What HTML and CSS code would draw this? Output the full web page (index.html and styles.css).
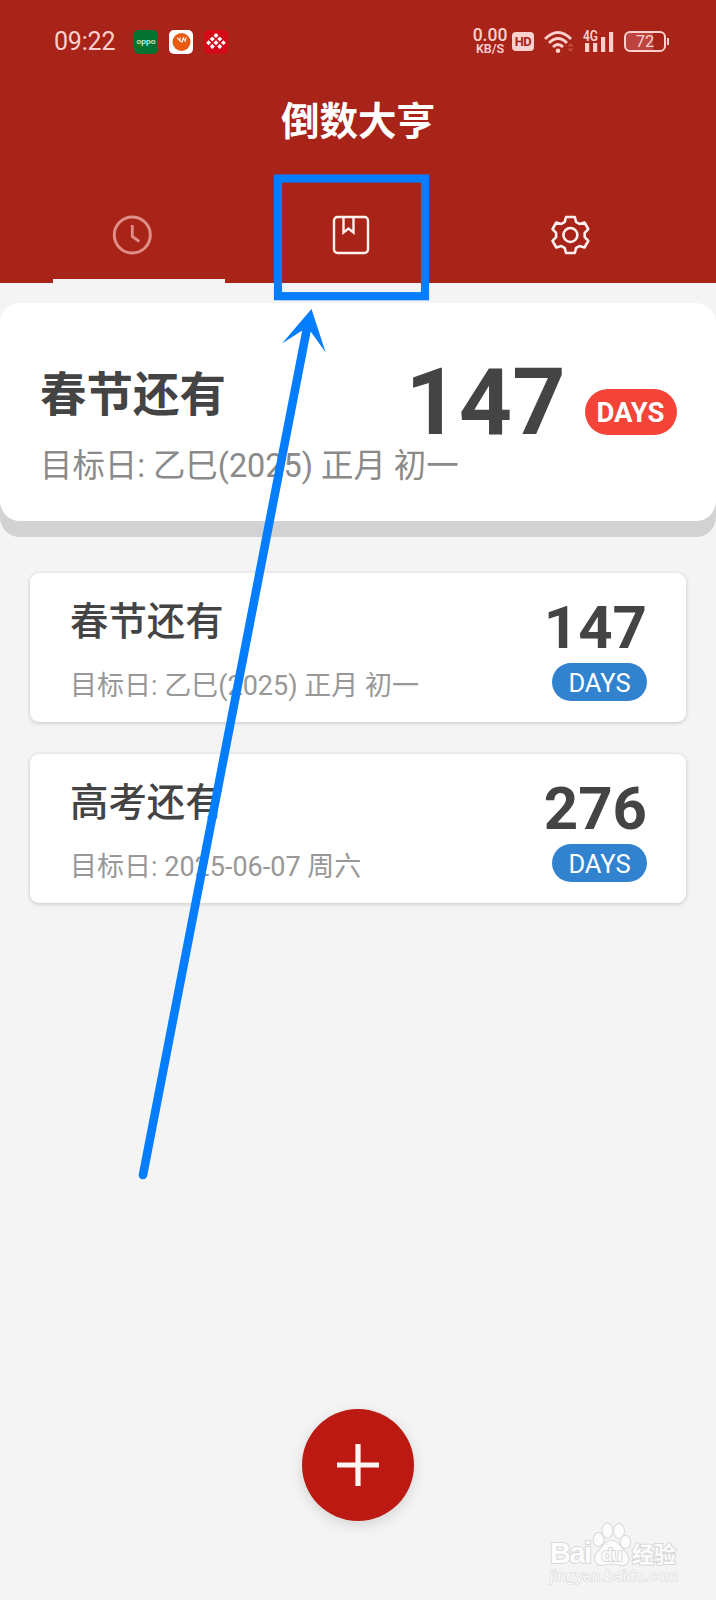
FILE: index.html
```html
<!DOCTYPE html>
<html lang="zh-CN">
<head>
<meta charset="utf-8">
<title>倒数大亨</title>
<link rel="stylesheet" href="styles.css">
</head>
<body>
<div class="screen">
  <header class="header">
    <div class="status">
      <span class="clock">09:22</span>
      <svg class="app-icon" viewBox="0 0 24 24"><rect width="24" height="24" rx="5" fill="#047331"/><text x="12" y="13.500" text-anchor="middle" class="oppo" textLength="19" lengthAdjust="spacingAndGlyphs">oppo</text></svg>
      <svg class="app-icon" viewBox="0 0 24 24"><rect width="24" height="24" rx="5" fill="#fff"/><circle cx="12.500" cy="12" r="9" fill="#e85a13"/><path d="M8 7.500l2.500 3 1-3 M10.500 10.500l2.500 1.500 2-5 M15.500 11l2-3.500 M13.500 8l3.500 4" fill="none" stroke="#fff" stroke-width="1.100"/></svg>
      <svg class="app-icon" viewBox="0 0 24 24"><rect width="24" height="24" rx="5" fill="#d50919"/><path fill="#fff" d="M12 3l2.500 2.500L12 8 9.500 5.500zM8.300 6.500l2.500 2.500-2.500 2.500L5.800 9zM15.700 6.500L18.200 9l-2.500 2.500L13.200 9zM4.600 10.200l2.500 2.500-2.500 2.500-2.500-2.500zM12 10.200l2.500 2.500L12 15.200l-2.500-2.500zM19.400 10.200l2.500 2.500-2.500 2.500-2.500-2.500zM8.300 13.900l2.500 2.500-2.500 2.500-2.500-2.500zM15.700 13.900l2.500 2.500-2.500 2.500-2.500-2.500z"/></svg>
      <div class="speed"><b>0.00</b><small>KB/S</small></div>
      <span class="hd">HD</span>
      <svg class="wifi" viewBox="0 0 31 24"><g fill="none" stroke="#fcd0cd" stroke-width="2.900"><path d="M1 9Q14 -4 27 9"/><path d="M5 13Q14 4 23 13"/><path d="M9 17Q14 12 19 17"/></g><circle cx="14" cy="20.800" r="2.300" fill="#fcd0cd"/><path d="M23.500 16.500l3-3.500 3 3.500zM23.500 18.500l3 3.500 3-3.500z" fill="#c94a43"/></svg>
      <svg class="signal" viewBox="0 0 31 24"><path d="M2 13h4.200v9H2zM10 13h4.200v9H10zM18 7h4.200v15H18zM26 2h4.200v20H26z" fill="#fcd0cd"/><text x="0" y="11" class="net" textLength="15" lengthAdjust="spacingAndGlyphs">4G</text></svg>
      <div class="battery"><span>72</span></div>
    </div>
    <h1 class="title">倒数大亨</h1>
    <nav class="tabs">
      <a class="tab tab-active"><svg class="icon" viewBox="0 0 40 40"><circle cx="20.300" cy="20" r="18" stroke-width="3"/><path d="M20.300 10v11.500l7 5" stroke-width="2.800"/></svg></a>
      <a class="tab"><svg class="icon" viewBox="0 0 40 40"><rect x="3" y="2" width="34" height="36" rx="3.500"/><path d="M12.500 3v14.500l5-4 5 4V3"/></svg></a>
      <a class="tab"><svg class="icon" viewBox="0 0 40 40"><path class="gear" d="M14.800 6.800L16 2H24.800L26 6.800L29.500 9L34.500 7.500L38.300 14.100L34.700 17.800V22.200L38.300 25.900L34.500 32.500L29.500 31L26 33.200L24.800 38H16L14.800 33.200L11.300 31L6.300 32.500L2.500 25.900L6.100 22.200V17.800L2.500 14.100L6.300 7.500L11.300 9Z"/><circle class="gear" cx="20.400" cy="20" r="7"/></svg></a>
    </nav>
  </header>
  <section class="hero">
    <div class="hero-row">
      <h2 class="hero-title">春节还有</h2>
      <b class="hero-num">147</b>
      <span class="hero-pill">DAYS</span>
    </div>
    <p class="hero-sub">目标日: 乙巳(2025) 正月 初一</p>
  </section>
  <main class="list">
    <article class="card">
      <div><h3 class="card-title">春节还有</h3><p class="card-sub">目标日: 乙巳(2025) 正月 初一</p></div>
      <div class="count"><b class="num">147</b><span class="pill">DAYS</span></div>
    </article>
    <article class="card">
      <div><h3 class="card-title">高考还有</h3><p class="card-sub">目标日: 2025-06-07 周六</p></div>
      <div class="count"><b class="num">276</b><span class="pill">DAYS</span></div>
    </article>
  </main>
  <button class="fab" aria-label="添加"><svg viewBox="0 0 112 112"><path d="M35 56h42M56 35v42" stroke="#fff5f2" stroke-width="5.200"/></svg></button>
  <svg class="watermark" viewBox="0 0 150 70">
    <g fill="#fcfcfc" stroke="#d8d8d8" stroke-width="2" paint-order="stroke">
      <text x="7" y="32" class="wm-latin" textLength="42">Bai</text>
      <ellipse cx="55.500" cy="8.500" rx="5" ry="6.500"/><ellipse cx="64.500" cy="-.5" rx="5" ry="7"/><ellipse cx="76" cy="0" rx="5" ry="7"/><ellipse cx="82.500" cy="11" rx="4.700" ry="6"/>
      <path d="M69 10C61 10 60 17 55 21C49 27 53 35 60 34Q69 31 78 34C86 35 88 26 82 21C77 16 76 10 69 10Z"/>
      <text x="58.500" y="30" class="wm-du" textLength="21">du</text>
      <text x="89" y="31" class="wm-cjk" textLength="44">经验</text>
      <text x="7" y="50" class="wm-url" textLength="128">jingyan.baidu.com</text>
    </g>
  </svg>
  <svg class="annotation" viewBox="0 0 716 1600">
    <rect x="278" y="178.500" width="147" height="117.700" fill="none" stroke="#047eff" stroke-width="8.200"/>
    <path d="M307 328L143 1175" stroke="#047eff" stroke-width="8.600" stroke-linecap="round"/>
    <path d="M311.500 309L282 343.500L303 330L311 332L325.700 352.500Z" fill="#047eff"/>
  </svg>
</div>
</body>
</html>
```
FILE: styles.css
```css
* { box-sizing: border-box; }
body { margin: 0; background: #f4f4f4; font-family: Roboto, "Noto Sans CJK SC", sans-serif; color: #444; }
h1, h2, h3, p { margin: 0; }
.screen { position: relative; width: 716px; height: 1600px; overflow: hidden; }

.header { height: 282.500px; background: #a82318; display: flex; flex-direction: column; }
.status { height: 83px; padding: 0 47px 0 54px; display: flex; align-items: center; color: #fcd0cd; }
.clock { width: 80px; font-size: 25px; line-height: 30px; letter-spacing: -.2px; }
.app-icon { width: 24px; height: 24px; margin-right: 10.800px; }
.oppo { font: 500 7px Roboto, sans-serif; fill: #d8f3dd; }
.speed { margin-left: auto; width: 36px; display: flex; flex-direction: column; align-items: center; }
.speed b { font-size: 17.500px; font-weight: 500; line-height: 13px; }
.speed small { font-size: 12.500px; font-weight: 600; line-height: 13px; }
.hd { margin-left: 4px; width: 22px; height: 19px; border-radius: 4px; background: #fcd0cd; color: #a82318; font-size: 13px; font-weight: 700; line-height: 20px; text-align: center; letter-spacing: -.5px; }
.wifi { width: 31px; height: 24px; margin-left: 10px; }
.signal { width: 31px; height: 24px; margin-left: 8px; }
.net { font: 600 14px Roboto, sans-serif; fill: #fcd0cd; stroke: #a82318; stroke-width: 2px; paint-order: stroke; }
.battery { position: relative; width: 42px; height: 21px; margin: 0 3px 0 10px; border: 2px solid #fcd0cd; border-radius: 6px; background: linear-gradient(90deg, #bd443e 72%, transparent 72%); font-size: 16.500px; line-height: 18px; text-align: center; }
.battery::after { content: ""; position: absolute; right: -5px; top: 5px; width: 2px; height: 7px; background: #fcd0cd; }
.title { height: 77px; line-height: 78px; color: #fff; font-size: 38.500px; text-align: center; font-weight: 700; }
.tabs { flex: 1; padding: 0 36.500px 0 22.500px; display: grid; grid-template-columns: repeat(3, 1fr); }
.tab { position: relative; display: flex; justify-content: center; padding-top: 54.700px; }
.tab-active::after { content: ""; position: absolute; left: 30.500px; bottom: 0; width: 172px; height: 4px; background: #f4f4f4; }
.icon { width: 40px; height: 40px; fill: none; stroke: #fff1ee; stroke-width: 2.400; }
.gear { stroke-width: 2.600; stroke-linejoin: round; }
.tab-active .icon { stroke: #df8e88; }

.hero { margin-top: 20px; height: 218.500px; padding: 55px 39.500px 0 40px; background: #fff; border-radius: 20px; box-shadow: 0 16px 0 #d2d2d2; }
.hero-row { height: 82px; display: flex; }
.hero-title { font-size: 46.500px; line-height: 74px; font-weight: 700; }
.hero-num { margin-left: auto; font-size: 93px; line-height: 90px; }
.hero-pill { margin: 31.500px 0 0 19px; width: 92px; height: 45.500px; border-radius: 23px; background: #f34437; color: #fff; font-size: 27.500px; font-weight: 700; line-height: 48px; text-align: center; }
.hero-sub { margin-top: 4px; font-size: 32.400px; line-height: 44px; color: #8a8a8a; font-weight: 400; white-space: nowrap; }

.list { margin-top: 51.500px; padding: 0 30px; display: flex; flex-direction: column; gap: 31.500px; }
.card { height: 149.500px; padding: 19px 39px 0 40px; display: flex; justify-content: space-between; background: #fff; border-radius: 9px; box-shadow: 0 1px 4px rgba(0, 0, 0, .2); }
.card-title { font-size: 38.400px; line-height: 59px; font-weight: 500; }
.card-sub { margin-top: 15px; font-size: 27px; line-height: 40px; color: #989898; white-space: nowrap; }
.count { display: flex; flex-direction: column; align-items: flex-end; }
.num { font-size: 60px; line-height: 71px; }
.pill { width: 95px; height: 38.500px; border-radius: 20px; background: #3182cf; color: #fff; font-size: 25.500px; line-height: 40px; text-align: center; }

.fab { position: absolute; left: 302px; top: 1409px; width: 112px; height: 112px; padding: 0; border: 0; border-radius: 50%; background: #bb1912; box-shadow: 0 4px 14px rgba(0, 0, 0, .13); }
.fab svg { display: block; }
.watermark { position: absolute; left: 543px; top: 1531px; width: 150px; height: 70px; overflow: visible; }
.wm-latin { font: 700 29px "Liberation Sans", sans-serif; }
.wm-du { font: 700 19px "Liberation Sans", sans-serif; }
.wm-cjk { font: 700 22px "Noto Sans CJK SC", sans-serif; }
.wm-url { font: 400 15px "Liberation Sans", sans-serif; stroke-width: 1.200px; }
.annotation { position: absolute; left: 0; top: 0; width: 716px; height: 1600px; pointer-events: none; }
```
